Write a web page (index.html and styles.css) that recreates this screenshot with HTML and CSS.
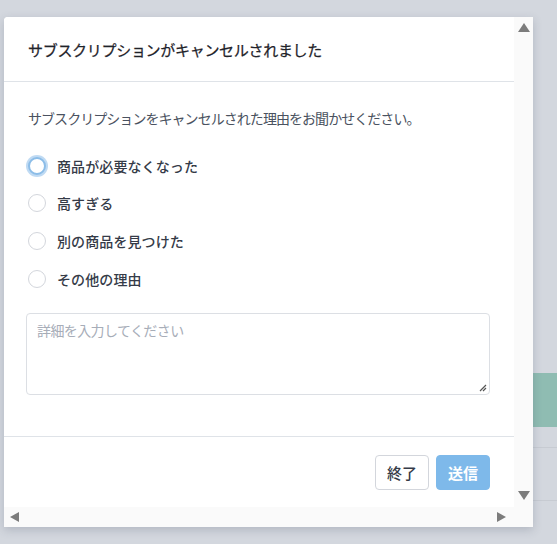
FILE: index.html
```html
<!DOCTYPE html>
<html lang="ja">
<head>
<meta charset="utf-8">
<title>サブスクリプションがキャンセルされました</title>
<link rel="stylesheet" href="styles.css">
</head>
<body>
<div class="backdrop">
  <div class="bg-spacer"></div>
  <div class="bg-row bg-teal"></div>
  <div class="bg-row bg-line bg-line-short"></div>
  <div class="bg-row bg-line"></div>
</div>

<div class="dialog" role="dialog" aria-labelledby="dlg-title">
  <div class="viewport">
    <header class="dlg-header">
      <h2 id="dlg-title" class="dlg-title">サブスクリプションがキャンセルされました</h2>
    </header>
    <div class="dlg-body">
      <p class="dlg-desc">サブスクリプションをキャンセルされた理由をお聞かせください。</p>
      <ul class="reasons">
        <li class="reason"><span class="radio radio-focus"></span><span class="reason-label">商品が必要なくなった</span></li>
        <li class="reason"><span class="radio"></span><span class="reason-label">高すぎる</span></li>
        <li class="reason"><span class="radio"></span><span class="reason-label">別の商品を見つけた</span></li>
        <li class="reason"><span class="radio"></span><span class="reason-label">その他の理由</span></li>
      </ul>
      <div class="textarea">
        <span class="placeholder">詳細を入力してください</span>
        <svg class="grip" width="8" height="8" viewBox="0 0 8 8"><path d="M7 1 L1 7 M7 4 L4 7" stroke="#555" stroke-width="1.2" fill="none"/></svg>
      </div>
    </div>
    <footer class="dlg-footer">
      <button class="btn btn-close" type="button">終了</button>
      <button class="btn btn-send" type="button">送信</button>
    </footer>
  </div>
  <div class="vscroll">
    <span class="arrow arrow-up"></span>
    <span class="arrow arrow-down"></span>
  </div>
  <div class="hscroll">
    <span class="arrow arrow-left"></span>
    <span class="arrow arrow-right"></span>
  </div>
  <div class="corner"></div>
</div>
</body>
</html>
```
FILE: styles.css
```css
html, body {
  margin: 0;
  padding: 0;
}
body {
  width: 557px;
  height: 544px;
  overflow: hidden;
  background: #d3d7de;
  font-family: "Noto Sans CJK JP", "Noto Sans", sans-serif;
  position: relative;
}

.backdrop {
  display: flex;
  flex-direction: column;
  margin-left: 510px;
}
.bg-spacer { height: 373px; }
.bg-row { height: 54px; }
.bg-teal { background: #8fbcb2; }
.bg-line { height: 52px; border-bottom: 1px solid #c7cbd2; }
.bg-line-short { height: 20px; }

.dialog {
  position: absolute;
  left: 4px;
  top: 17px;
  width: 529px;
  height: 510px;
  display: grid;
  grid-template-columns: 1fr 19px;
  grid-template-rows: 1fr 20px;
  background: #fff;
  border-radius: 4px 0 0 0;
  box-shadow: 0 3px 10px rgba(60, 70, 90, 0.22);
  overflow: hidden;
}

.viewport {
  display: flex;
  flex-direction: column;
  min-height: 0;
  background: #fff;
}

.dlg-header {
  height: 64px;
  border-bottom: 1px solid #dfe3e8;
  display: flex;
  align-items: center;
  padding: 0 24px;
  flex: none;
}
.dlg-title {
  margin: 0;
  font-size: 15px;
  font-weight: 400;
  color: #1f232a;
  letter-spacing: -0.3px;
  padding-top: 1px;
  -webkit-text-stroke: 0.25px #1f232a;
}

.dlg-body {
  flex: 1;
  padding: 24px 24px 0 22px;
}
.dlg-desc {
  margin: 0;
  font-size: 14px;
  line-height: 24px;
  color: #4a5260;
  letter-spacing: -0.95px;
  padding-left: 2px;
}

.reasons {
  list-style: none;
  margin: 17px 0 0;
  padding: 0 0 0 1px;
}
.reason {
  height: 37.67px;
  display: flex;
  align-items: center;
}
.radio {
  width: 16px;
  height: 16px;
  border: 1px solid #d3d6dc;
  border-radius: 50%;
  background: #fff;
  flex: none;
  margin-left: 1px;
  margin-right: 11px;
}
.radio-focus {
  border: 2px solid #8cbde8;
  width: 14px;
  height: 14px;
  box-shadow: 0 0 0 2px rgba(164, 202, 238, 0.7);
}
.reason-label {
  font-size: 14px;
  font-weight: 500;
  color: #353b48;
  letter-spacing: 0.1px;
}

.textarea {
  margin-top: 15px;
  height: 82px;
  box-sizing: border-box;
  border: 1px solid #dcdfe4;
  border-radius: 4px;
  position: relative;
  padding: 3px 10px;
}
.placeholder {
  font-size: 14px;
  color: #a7adb8;
  letter-spacing: -0.6px;
}
.grip {
  position: absolute;
  right: 2px;
  bottom: 2px;
}

.dlg-footer {
  flex: none;
  height: 70px;
  border-top: 1px solid #dfe3e8;
  display: flex;
  justify-content: flex-end;
  align-items: center;
  gap: 7px;
  padding: 0 24px;
}
.btn {
  height: 35px;
  width: 54px;
  border-radius: 4px;
  font-family: inherit;
  font-size: 15px;
  font-weight: 500;
  padding: 0;
  cursor: pointer;
}
.btn-close {
  background: #fff;
  border: 1px solid #d3d6dc;
  color: #353b48;
}
.btn-send {
  background: #7eb9ea;
  border: 1px solid #7eb9ea;
  color: #fff;
  font-weight: 700;
}

.vscroll {
  background: #fafafa;
  display: flex;
  flex-direction: column;
  justify-content: space-between;
  align-items: center;
  padding: 6px 0 7px;
}
.hscroll {
  background: #fafafa;
  display: flex;
  justify-content: space-between;
  align-items: center;
  padding: 0 8px 0 6px;
}
.corner { background: #fafafa; }

.arrow {
  width: 0;
  height: 0;
  border-style: solid;
}
.arrow-up {
  border-width: 0 6px 9px 6px;
  border-color: transparent transparent #7c7c7c transparent;
}
.arrow-down {
  border-width: 9px 6px 0 6px;
  border-color: #7c7c7c transparent transparent transparent;
}
.arrow-left {
  border-width: 5.5px 9px 5.5px 0;
  border-color: transparent #7c7c7c transparent transparent;
}
.arrow-right {
  border-width: 5.5px 0 5.5px 9px;
  border-color: transparent transparent transparent #7c7c7c;
}
```
